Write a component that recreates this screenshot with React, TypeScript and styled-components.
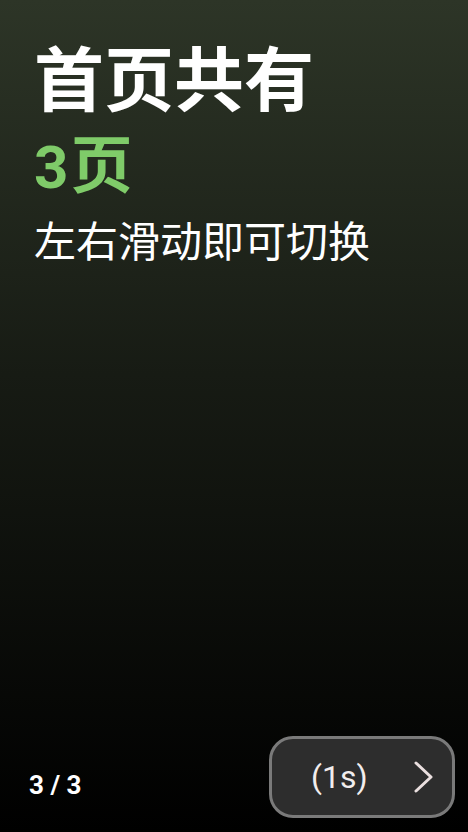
import styled, { createGlobalStyle } from "styled-components";

const GlobalStyle = createGlobalStyle`
  html, body {
    margin: 0;
    padding: 0;
    background: #000;
  }
  #root {
    height: 100vh;
  }
`;

const Screen = styled.div`
  box-sizing: border-box;
  width: 468px;
  height: 832px;
  display: flex;
  flex-direction: column;
  justify-content: space-between;
  background: linear-gradient(180deg, #2d3527 0%, #171b14 45%, #000 100%);
  font-family: "Noto Sans CJK SC", "Noto Sans", Roboto, sans-serif;
  color: #fff;
  overflow: hidden;
`;

const Intro = styled.div`
  display: flex;
  flex-direction: column;
  padding: 30px 34px 0;
`;

const Title = styled.h1`
  margin: 0;
  font-size: 70px;
  font-weight: 700;
  line-height: 92px;
`;

const Count = styled.div`
  display: flex;
  align-items: baseline;
  margin-top: 2px;
  font-size: 62px;
  font-weight: 700;
  line-height: 74px;
  color: #7fcb69;
`;

const Digit = styled.span`
  font-family: Roboto, "Noto Sans", sans-serif;
  font-size: 60px;
  margin-right: 2px;
`;

const Hint = styled.p`
  margin: 6px 0 0;
  font-size: 42px;
  font-weight: 400;
  line-height: 56px;
`;

const Footer = styled.div`
  display: flex;
  align-items: center;
  justify-content: space-between;
  padding: 0 13px 14px 29px;
`;

const Pager = styled.span`
  font-family: Roboto, "Noto Sans", sans-serif;
  font-size: 26px;
  font-weight: 700;
  color: #fff;
  padding-top: 16px;
`;

const NextButton = styled.button`
  box-sizing: border-box;
  width: 186px;
  height: 82px;
  display: flex;
  align-items: center;
  justify-content: space-between;
  padding: 0 16px 0 39px;
  background: #2d2d2d;
  border: 3px solid #7a7a7a;
  border-radius: 24px;
  color: #f2eded;
  font-family: Roboto, "Noto Sans", sans-serif;
  font-size: 32px;
  font-weight: 400;
  cursor: pointer;
`;

const Chevron = styled.svg`
  width: 24px;
  height: 34px;
`;

export default function App() {
  return (
    <>
      <GlobalStyle />
      <Screen>
        <Intro>
          <Title>首页共有</Title>
          <Count>
            <Digit>3</Digit>页
          </Count>
          <Hint>左右滑动即可切换</Hint>
        </Intro>
        <Footer>
          <Pager>3 / 3</Pager>
          <NextButton>
            <span>(1s)</span>
            <Chevron viewBox="0 0 24 34" fill="none">
              <path
                d="M4 3 L19 17 L4 31"
                stroke="#eadfdf"
                strokeWidth="3"
                strokeLinecap="round"
                strokeLinejoin="round"
              />
            </Chevron>
          </NextButton>
        </Footer>
      </Screen>
    </>
  );
}
